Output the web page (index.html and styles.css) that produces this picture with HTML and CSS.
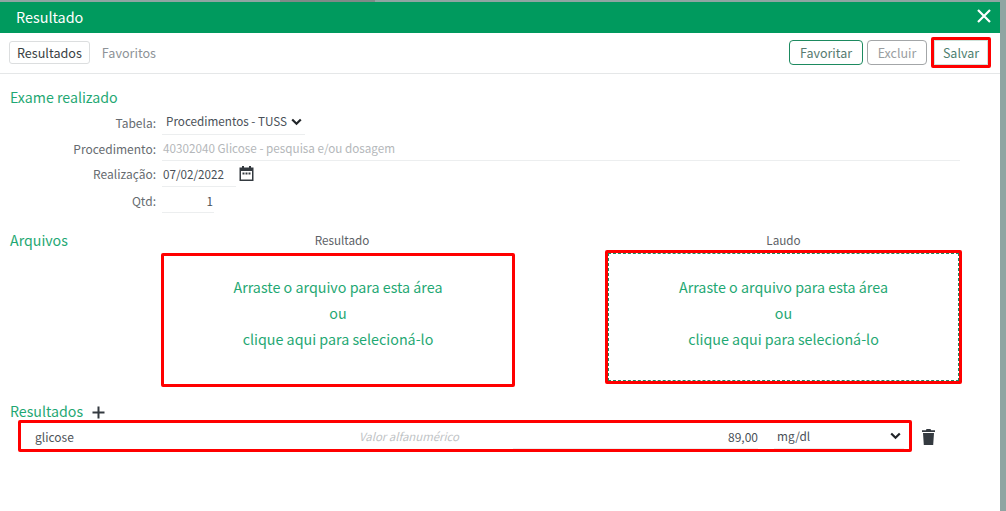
FILE: index.html
```html
<!DOCTYPE html>
<html lang="pt-BR">
<head>
<meta charset="utf-8">
<title>Resultado</title>
<link rel="stylesheet" href="styles.css">
</head>
<body>
<div class="modal">
  <header class="titlebar">
    <span class="title">Resultado</span>
    <svg class="close" width="14" height="14" viewBox="0 0 14 14"><path d="M1 1 13 13M13 1 1 13" stroke="#fff" stroke-width="2.2" fill="none"/></svg>
  </header>
  <nav class="toolbar">
    <div class="tabs">
      <span class="tab active">Resultados</span>
      <span class="tab">Favoritos</span>
    </div>
    <div class="actions">
      <span class="btn btn-fav">Favoritar</span>
      <span class="btn btn-off">Excluir</span>
      <span class="mark-save"><span class="btn btn-save">Salvar</span></span>
    </div>
  </nav>
  <main class="content">
    <h2 class="section-title exam-title">Exame realizado</h2>
    <div class="form">
      <div class="row row-tabela">
        <label class="lbl">Tabela:</label>
        <span class="field f-tabela">Procedimentos - TUSS
          <svg class="chev" width="11" height="8" viewBox="0 0 11 8"><path d="M1.2 1.5 5.5 5.8 9.8 1.5" stroke="#212529" stroke-width="2.2" fill="none"/></svg>
        </span>
      </div>
      <div class="row row-proc">
        <label class="lbl">Procedimento:</label>
        <span class="field f-proc">40302040 Glicose - pesquisa e/ou dosagem</span>
      </div>
      <div class="row row-data">
        <label class="lbl">Realização:</label>
        <span class="field f-data">07/02/2022</span>
        <svg class="cal" width="15" height="15" viewBox="0 0 15 15"><path fill="#343a40" d="M3 0h2v1.5h5V0h2v1.500h2.500V15H.5V1.500H3zM2 5v8.500h11V5z"/><path fill="#343a40" d="M3.500 6.500h2v2h-2zM6.500 6.500h2v2h-2zM9.500 6.500h2v2h-2z"/></svg>
      </div>
      <div class="row row-qtd">
        <label class="lbl">Qtd:</label>
        <span class="field f-qtd">1</span>
      </div>
    </div>
    <section class="files">
      <h2 class="section-title files-title">Arquivos</h2>
      <div class="drop-col col-a">
        <div class="drop-label">Resultado</div>
        <div class="drop">
          <p>Arraste o arquivo para esta área</p><p>ou</p><p>clique aqui para selecioná-lo</p>
        </div>
      </div>
      <div class="drop-col col-b">
        <div class="drop-label">Laudo</div>
        <div class="drop drop-dashed">
          <p>Arraste o arquivo para esta área</p><p>ou</p><p>clique aqui para selecioná-lo</p>
        </div>
      </div>
    </section>
    <div class="results-head">
      <h2 class="section-title">Resultados</h2>
      <svg class="plus" width="13" height="13" viewBox="0 0 13 13"><path d="M6.5.5v12M.5 6.500h12" stroke="#343a40" stroke-width="2" fill="none"/></svg>
    </div>
    <div class="result-wrap">
      <div class="result-row">
        <span class="r-name">glicose</span>
        <span class="r-alpha">Valor alfanumérico</span>
        <span class="r-val">89,00</span>
        <span class="r-unit">mg/dl
          <svg class="chev" width="11" height="8" viewBox="0 0 11 8"><path d="M1.2 1.5 5.5 5.8 9.8 1.5" stroke="#212529" stroke-width="2.2" fill="none"/></svg>
        </span>
      </div>
      <svg class="trash" width="13" height="16" viewBox="0 0 13 16"><path fill="#343a40" d="M4.5 0h4l.6 1.200H13V3H0V1.200h3.900zM1 4h11l-.8 12H1.800z"/></svg>
    </div>
  </main>
</div>
</body>
</html>
```
FILE: styles.css
```css
* { box-sizing: border-box; }
html, body { margin: 0; height: 100%; }
body {
  background: linear-gradient(#7f8a88, #7f8a88) 280px 0 / 95px 2px no-repeat, #8ea5a2;
  overflow: hidden;
  font-family: "Noto Sans CJK SC", "Source Sans Pro", "Noto Sans", sans-serif;
  font-size: 12px;
  color: #555b60;
  padding-top: 2px;
}
.modal { width: 1000px; height: 509px; background: #fff; }
.titlebar {
  height: 31px;
  background: #009a5e;
  color: #fff;
  display: flex;
  align-items: center;
  justify-content: space-between;
  padding: 0 9px 0 16px;
}
.title { font-size: 14.4px; line-height: 20px; margin-top: -2px; }
.close { margin-top: -3px; }
.toolbar {
  height: 41px;
  border-bottom: 1px solid #e5e7e8;
  display: flex;
  align-items: center;
  justify-content: space-between;
  padding: 0 9px;
}
.tabs { display: flex; gap: 4px; margin-top: -1px; }
.tab { line-height: 19px; padding: 1px 7px; border: 1px solid transparent; color: #8d9297; border-radius: 3px; font-size: 12.6px; }
.tab.active { color: #3a3f44; border-color: #dcdedf; }
.actions { display: flex; align-items: center; gap: 4px; margin-top: -1px; }
.btn { display: block; line-height: 23px; height: 25px; text-align: center; border: 1px solid #1d8a60; border-radius: 4px; font-size: 12.5px; color: #567a70; }
.btn-fav { width: 74px; }
.btn-off { width: 60px; border-color: #a3a6a8; color: #9a9ea1; }
.mark-save { display: block; border: 3px solid #f00; border-radius: 2px; }
.btn-save { width: 54px; border-radius: 0; border-color: #cfe2da; color: #4e7f70; }
.content { padding: 0 10px; }
.section-title { margin: 0; font-weight: 400; font-size: 14.2px; line-height: 20px; color: #1fa873; }
.exam-title { padding-top: 13px; }
.form { margin-top: 1px; }
.row { display: flex; align-items: flex-start; height: 26px; }
.lbl { width: 146px; text-align: right; color: #666b70; font-size: 12px; line-height: 18px; }
.field { display: block; margin-left: 6px; height: 100%; font-size: 11.7px; line-height: 18px; border-bottom: 1px solid #eceeef; color: #495057; }
.row-tabela { height: 27px; }
.row-tabela .lbl { padding-top: 6px; }
.f-tabela { width: 143px; padding: 0 3px 0 4px; display: flex; justify-content: space-between; align-items: center; height: 27px; line-height: 32px; }
.f-tabela .chev { margin-top: 2px; }
.row-proc .lbl { padding-top: 5px; }
.f-proc { width: 798px; padding: 4px 0 0 1px; color: #b4b7ba; }
.row-data .lbl { padding-top: 4px; }
.f-data { width: 74px; padding: 4px 0 0 1px; }
.cal { margin: 5px 0 0 3px; }
.row-qtd .lbl { padding-top: 5px; }
.f-qtd { width: 52px; padding: 5px 1px 0 0; text-align: right; }
.files { height: 168px; margin-top: 18px; display: flex; }
.files-title { width: 142px; margin-top: -1px; }
.drop-col { width: 354px; }
.col-a { margin-left: 9px; }
.col-b { margin-left: 90px; width: 357px; }
.drop-label { text-align: center; font-size: 11.7px; line-height: 18px; height: 22px; color: #5c6166; }
.col-a .drop-label { padding-left: 8px; }
.drop {
  height: 134px;
  border: 3px solid #f00;
  border-radius: 2px;
  padding-top: 18px;
  text-align: center;
  color: #1fa873;
  font-size: 14.3px;
  line-height: 26px;
}
.drop p { margin: 0; }
.col-b .drop { position: relative; margin-top: -3px; padding-top: 21px; }
.drop-dashed::after { content: ""; position: absolute; inset: 0; border: 1px dashed #1a8a60; pointer-events: none; }
.results-head { display: flex; align-items: center; gap: 9px; height: 18px; margin-top: 3px; }
.plus { margin-top: 2px; }
.result-wrap { display: flex; align-items: center; padding-left: 8px; }
.result-row {
  width: 894px;
  height: 32px;
  border: 3px solid #f00;
  border-radius: 2px;
  display: flex;
  align-items: center;
  padding: 0 5px 0 14px;
}
.r-name { width: 278px; color: #4f5459; }
.r-alpha { width: 200px; padding-left: 46px; font-size: 11.4px; font-style: italic; color: #c0c3c5; white-space: nowrap; }
.r-val { width: 245px; height: 26px; line-height: 27px; text-align: right; color: #495057; border-bottom: 1px solid #eceeef; }
.r-unit { flex: 1; height: 26px; line-height: 27px; margin-left: 16px; padding: 0 3px; display: flex; justify-content: space-between; align-items: center; font-size: 11.8px; color: #495057; border-bottom: 1px solid #eceeef; }
.trash { margin: 2px 0 0 10px; }
```
